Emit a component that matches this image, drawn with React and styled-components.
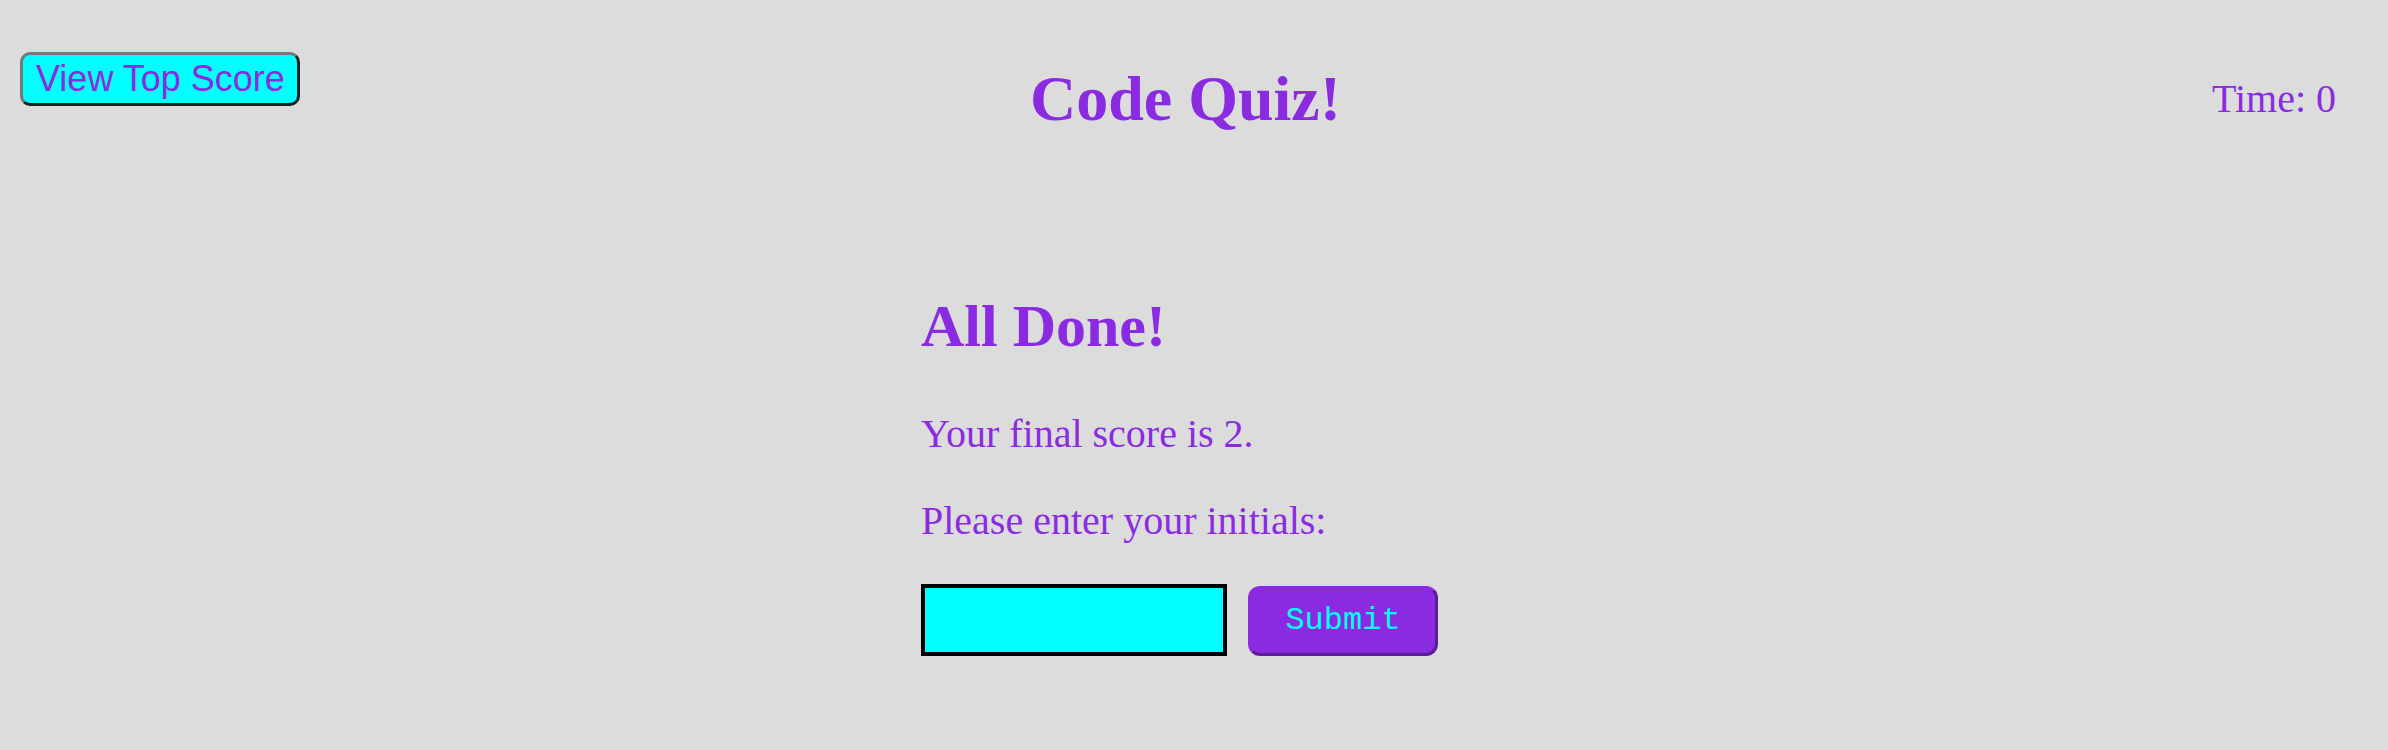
import React, { useState } from 'react';
import styled, { createGlobalStyle } from 'styled-components';

const purple = '#8a2be2';
const cyan = '#00ffff';

const GlobalStyle = createGlobalStyle`
  html, body {
    margin: 0;
    padding: 0;
    background: #dcdcdc;
  }

  body {
    min-height: 750px;
    font-family: "Liberation Serif", "Times New Roman", serif;
    color: ${purple};
  }
`;

const Header = styled.header`
  display: grid;
  grid-template-columns: 1fr auto 1fr;
  align-items: start;
  padding: 52px 37px 0 20px;
`;

const ScoreButton = styled.button`
  justify-self: start;
  padding: 3px 12px 3px 13px;
  font-family: "Liberation Sans", Arial, sans-serif;
  font-size: 36px;
  line-height: normal;
  color: ${purple};
  background: ${cyan};
  border: 3px solid;
  border-color: #777 #1e1e1e #1e1e1e #777;
  border-radius: 10px;
  cursor: pointer;
`;

const Title = styled.h1`
  margin: 10px 0 0;
  font-size: 64px;
  font-weight: 700;
  line-height: normal;
  text-align: center;
`;

const Timer = styled.div`
  justify-self: end;
  margin-top: 23px;
  padding-right: 15px;
  font-size: 40px;
  line-height: normal;
`;

const Panel = styled.main`
  width: 546px;
  margin: 156px auto 0;
`;

const Heading = styled.h2`
  margin: 0 0 49px;
  font-size: 60px;
  font-weight: 700;
  line-height: normal;
`;

const Text = styled.p`
  margin: 0 0 40px;
  font-size: 40px;
  line-height: normal;
`;

const Form = styled.form`
  display: flex;
  align-items: center;
  gap: 21px;
`;

const Initials = styled.input`
  box-sizing: border-box;
  width: 306px;
  height: 72px;
  padding: 0 8px;
  font-family: "Liberation Sans", Arial, sans-serif;
  font-size: 30px;
  color: ${purple};
  background: ${cyan};
  border: 4px solid #000;
  outline: none;
`;

const Submit = styled.button`
  box-sizing: border-box;
  width: 190px;
  height: 70px;
  margin-top: 1px;
  font-family: "Liberation Mono", "Courier New", monospace;
  font-size: 32px;
  color: ${cyan};
  background: ${purple};
  border: 3px solid;
  border-color: ${purple} #5a1e96 #5a1e96 ${purple};
  border-radius: 12px;
  cursor: pointer;
`;

const App = () => {
  const [initials, setInitials] = useState('');

  return (
    <>
      <GlobalStyle />
      <Header>
        <ScoreButton type="button">View Top Score</ScoreButton>
        <Title>Code Quiz!</Title>
        <Timer>Time: 0</Timer>
      </Header>

      <Panel>
        <Heading>All Done!</Heading>
        <Text>Your final score is 2.</Text>
        <Text>Please enter your initials:</Text>
        <Form onSubmit={e => e.preventDefault()}>
          <Initials
            type="text"
            value={initials}
            onChange={e => setInitials(e.target.value)}
            aria-label="Initials"
          />
          <Submit type="submit">Submit</Submit>
        </Form>
      </Panel>
    </>
  );
};

export default App;
